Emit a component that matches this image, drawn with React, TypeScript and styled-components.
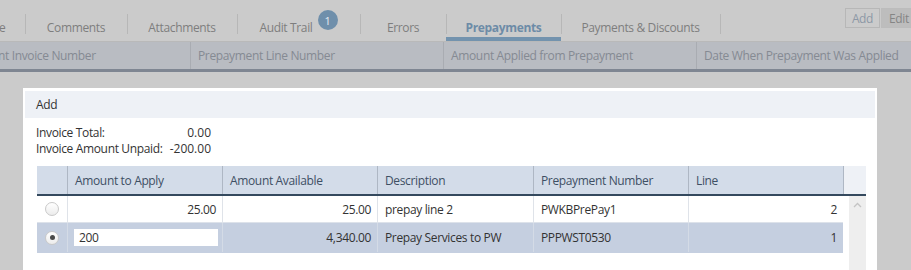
import React from "react";
import styled, { createGlobalStyle } from "styled-components";

const Global = createGlobalStyle`
  html, body { margin: 0; padding: 0; background: #cbcbcb; overflow: hidden; }
  body { font-family: "Open Sans", "Noto Sans", sans-serif; font-size: 12px; letter-spacing: -0.35px; }
  * { box-sizing: border-box; }
`;

const Page = styled.div`
  width: 911px;
  height: 270px;
  overflow: hidden;
  background: #cbcbcb;
`;

const TabBar = styled.div`
  display: flex;
  align-items: stretch;
  height: 42px;
  border-bottom: 1px solid #b9b9b9;
`;

const TabStrip = styled.div`
  display: flex;
  align-items: stretch;
  margin-left: -51px;
`;

const Tab = styled.div<{ $w: number; $active?: boolean; $first?: boolean }>`
  position: relative;
  width: ${(p) => p.$w}px;
  display: flex;
  align-items: center;
  justify-content: center;
  padding-top: 13px;
  color: ${(p) => (p.$active ? "#6d8ba7" : "#7e7e7e")};
  font-weight: ${(p) => (p.$active ? 700 : 400)};
  font-size: 12px;
  white-space: nowrap;
  &::before {
    content: "";
    display: ${(p) => (p.$first ? "none" : "block")};
    position: absolute;
    left: 0;
    top: 14px;
    height: 20px;
    border-left: 1px solid #b7b7b7;
  }
  &::after {
    content: "";
    display: ${(p) => (p.$active ? "block" : "none")};
    position: absolute;
    left: 0;
    right: 0;
    bottom: 0;
    height: 4px;
    background: #7393ae;
  }
`;

const TabEnd = styled.div`
  width: 1px;
  margin-top: 14px;
  height: 20px;
  border-left: 1px solid #b7b7b7;
`;

const Badge = styled.span`
  display: inline-flex;
  align-items: center;
  justify-content: center;
  width: 20px;
  height: 20px;
  border-radius: 50%;
  background: #6f8fab;
  color: #e6ecf2;
  font-size: 11px;
  font-weight: 400;
  margin-left: 5px;
  position: relative;
  top: -7px;
`;

const Spacer = styled.div`
  flex: 1;
`;

const Buttons = styled.div`
  display: flex;
  align-items: flex-start;
  padding-top: 8px;
  margin-right: -6px;
  gap: 1px;
`;

const ToolButton = styled.div<{ $pressed?: boolean; $w: number }>`
  width: ${(p) => p.$w}px;
  height: 20px;
  display: flex;
  align-items: center;
  justify-content: center;
  border: 1px solid ${(p) => (p.$pressed ? "#bcbcbc" : "#b7b7b7")};
  background: ${(p) => (p.$pressed ? "#bdbdbd" : "transparent")};
  color: ${(p) => (p.$pressed ? "#858585" : "#8d98a6")};
  font-size: 12px;
`;

const BgHeader = styled.div`
  height: 30px;
  background: #b9bcc2;
  border-bottom: 3px solid #7f8692;
  overflow: hidden;
  display: flex;
`;

const BgHeaderInner = styled.div`
  display: flex;
  margin-left: -63px;
`;

const BgCol = styled.div<{ $first?: boolean }>`
  width: 253px;
  flex: none;
  display: flex;
  align-items: center;
  padding-left: 7px;
  color: #858a93;
  font-size: 12px;
  white-space: nowrap;
  border-left: ${(p) => (p.$first ? "none" : "1px solid #a9acb2")};
`;

const Dialog = styled.div`
  margin: 16px 0 0 23px;
  width: 854px;
  height: 200px;
  background: #ffffff;
  padding: 3px 2px 0 2px;
`;

const DialogHeader = styled.div`
  height: 27px;
  background: #eef1f6;
  display: flex;
  align-items: center;
  padding-left: 11px;
  color: #333;
  font-size: 12px;
`;

const Summary = styled.div`
  margin: 6px 0 0 11px;
  width: 175px;
  display: grid;
  grid-template-columns: max-content 1fr;
  grid-auto-rows: 16px;
  align-items: center;
  color: #333;
  font-size: 12px;
  white-space: nowrap;
`;

const SumValue = styled.div`
  text-align: right;
  letter-spacing: 0;
`;

const Grid = styled.div`
  margin: 10px 0 0 12px;
  width: 829px;
`;

const HeaderRow = styled.div`
  display: grid;
  grid-template-columns: 30px 155px 155px 156px 155px 155px 23px;
  height: 30px;
  background: #d3dce9;
  border-bottom: 2px solid #34495e;
`;

const HeadCell = styled.div<{ $first?: boolean; $blank?: boolean }>`
  display: flex;
  align-items: center;
  padding-left: 7px;
  color: #3e4f64;
  font-size: 12px;
  white-space: nowrap;
  border-left: ${(p) => (p.$first ? "none" : "1px solid #aeb7c4")};
  background: ${(p) => (p.$blank ? "#eef1f6" : "transparent")};
`;

const Body = styled.div`
  display: flex;
`;

const Rows = styled.div`
  width: 806px;
`;

const Row = styled.div<{ $selected?: boolean; $h: number }>`
  display: grid;
  grid-template-columns: 30px 155px 155px 156px 155px 155px;
  height: ${(p) => p.$h}px;
  background: ${(p) => (p.$selected ? "#c5cfe0" : "#ffffff")};
  border-bottom: 1px solid ${(p) => (p.$selected ? "#c5cfe0" : "#dde2ea")};
`;

const Cell = styled.div<{ $right?: boolean; $sel?: boolean }>`
  display: flex;
  align-items: center;
  justify-content: ${(p) => (p.$right ? "flex-end" : "flex-start")};
  padding: 0 ${(p) => (p.$right ? 6 : 7)}px;
  color: #333;
  font-size: 12px;
  white-space: nowrap;
  border-left: 1px solid ${(p) => (p.$sel ? "#d4dbe6" : "#dfe3e9")};
`;

const RadioCell = styled.div`
  display: flex;
  align-items: center;
  justify-content: center;
`;

const Radio = styled.span<{ $checked?: boolean }>`
  width: 14px;
  height: 14px;
  border-radius: 50%;
  border: 1px solid #c9c9c9;
  background: linear-gradient(#ffffff, #ececec);
  display: flex;
  align-items: center;
  justify-content: center;
  &::after {
    content: "";
    display: ${(p) => (p.$checked ? "block" : "none")};
    width: 5px;
    height: 5px;
    border-radius: 50%;
    background: #4a4a4a;
  }
`;

const AmountInput = styled.input`
  width: 144px;
  height: 17px;
  border: none;
  outline: none;
  padding: 0 5px;
  font-family: "Open Sans", "Noto Sans", sans-serif;
  font-size: 12px;
  letter-spacing: -0.35px;
  color: #333;
  background: #ffffff;
`;

const InputCell = styled.div`
  display: flex;
  align-items: center;
  padding-left: 6px;
  border-left: 1px solid #d4dbe6;
`;

const ScrollCol = styled.div`
  width: 23px;
  padding-left: 6px;
  height: 80px;
`;

const Track = styled.div`
  width: 17px;
  height: 100%;
  background: #eeeeee;
  display: flex;
  justify-content: center;
  padding-top: 6px;
`;

const rows = [
  { checked: false, apply: "25.00", avail: "25.00", desc: "prepay line 2", num: "PWKBPrePay1", line: "2" },
  { checked: true, apply: "200", avail: "4,340.00", desc: "Prepay Services to PW", num: "PPPWST0530", line: "1" },
];

export default function App() {
  return (
    <Page>
      <Global />
      <TabBar>
        <TabStrip>
          <Tab $w={76} $first>Invoice</Tab>
          <Tab $w={102}>Comments</Tab>
          <Tab $w={110}>Attachments</Tab>
          <Tab $w={123}>
            Audit Trail<Badge>1</Badge>
          </Tab>
          <Tab $w={86}>Errors</Tab>
          <Tab $w={115} $active>Prepayments</Tab>
          <Tab $w={159}>Payments &amp; Discounts</Tab>
          <TabEnd />
        </TabStrip>
        <Spacer />
        <Buttons>
          <ToolButton $w={35}>Add</ToolButton>
          <ToolButton $w={36} $pressed>Edit</ToolButton>
        </Buttons>
      </TabBar>
      <BgHeader>
        <BgHeaderInner>
          <BgCol $first>Prepayment Invoice Number</BgCol>
          <BgCol>Prepayment Line Number</BgCol>
          <BgCol>Amount Applied from Prepayment</BgCol>
          <BgCol>Date When Prepayment Was Applied</BgCol>
        </BgHeaderInner>
      </BgHeader>
      <Dialog>
        <DialogHeader>Add</DialogHeader>
        <Summary>
          <div>Invoice Total:</div>
          <SumValue>0.00</SumValue>
          <div>Invoice Amount Unpaid:</div>
          <SumValue>-200.00</SumValue>
        </Summary>
        <Grid>
          <HeaderRow>
            <HeadCell $first />
            <HeadCell>Amount to Apply</HeadCell>
            <HeadCell>Amount Available</HeadCell>
            <HeadCell>Description</HeadCell>
            <HeadCell>Prepayment Number</HeadCell>
            <HeadCell>Line</HeadCell>
            <HeadCell $blank />
          </HeaderRow>
          <Body>
            <Rows>
              {rows.map((r, i) => (
                <Row key={i} $selected={r.checked} $h={r.checked ? 30 : 27}>
                  <RadioCell>
                    <Radio $checked={r.checked} />
                  </RadioCell>
                  {r.checked ? (
                    <InputCell>
                      <AmountInput defaultValue={r.apply} />
                    </InputCell>
                  ) : (
                    <Cell $right>{r.apply}</Cell>
                  )}
                  <Cell $right $sel={r.checked}>{r.avail}</Cell>
                  <Cell $sel={r.checked}>{r.desc}</Cell>
                  <Cell $sel={r.checked}>{r.num}</Cell>
                  <Cell $right $sel={r.checked}>{r.line}</Cell>
                </Row>
              ))}
            </Rows>
            <ScrollCol>
              <Track>
                <svg width="9" height="6" viewBox="0 0 9 6">
                  <polyline points="1,5 4.5,1.5 8,5" fill="none" stroke="#c4c4c4" strokeWidth="1.3" />
                </svg>
              </Track>
            </ScrollCol>
          </Body>
        </Grid>
      </Dialog>
    </Page>
  );
}
